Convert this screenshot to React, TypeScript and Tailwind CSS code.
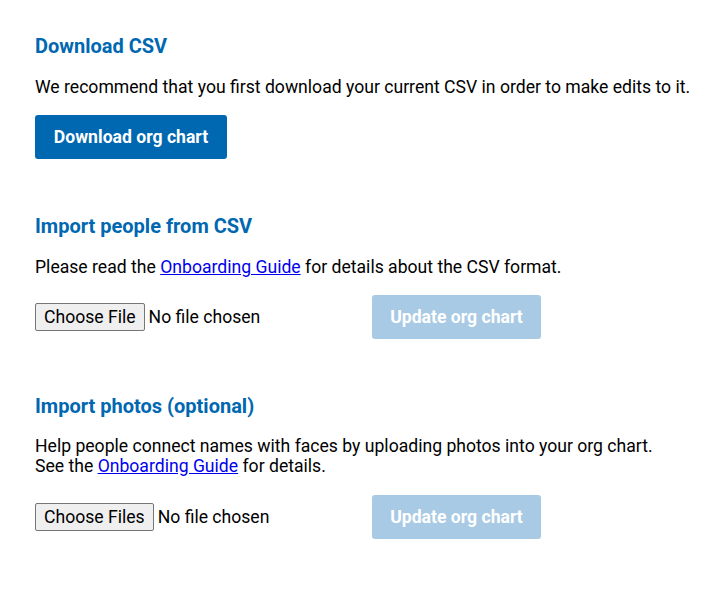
export default function App() {
  return (
    <div className="min-h-screen bg-white pl-[35px] pr-[20px] pt-[34px] font-['Roboto',sans-serif] text-[17.6px] text-black">
      {/* Download */}
      <section>
        <h2 className="text-[20px] leading-6 font-bold text-[#0067b1]">Download CSV</h2>
        <p className="mt-[19px] leading-5">
          We recommend that you first download your current CSV in order to make edits to it.
        </p>
        <button className="mt-[18px] h-[44px] w-[192px] rounded-[3px] bg-[#0067b1] text-[17.6px] font-bold text-white">
          Download org chart
        </button>
      </section>

      {/* Import people */}
      <section className="mt-[55px]">
        <h2 className="text-[20px] leading-6 font-bold text-[#0067b1]">Import people from CSV</h2>
        <p className="mt-[19px] leading-5">
          Please read the{' '}
          <a href="#" className="text-[#0000ee] underline">
            Onboarding Guide
          </a>{' '}
          for details about the CSV format.
        </p>
        <div className="mt-[18px] flex items-center">
          <input
            type="file"
            className="w-[337px] text-[17.6px] file:mr-[4px] file:rounded-[2px] file:border file:border-[#767676] file:bg-[#efefef] file:px-[8px] file:py-[0px] file:text-black"
          />
          <button
            disabled
            className="h-[44px] w-[169px] rounded-[3px] bg-[#a8cae4] text-[17.6px] font-bold text-white"
          >
            Update org chart
          </button>
        </div>
      </section>

      {/* Import photos */}
      <section className="mt-[55px]">
        <h2 className="text-[20px] leading-6 font-bold text-[#0067b1]">Import photos (optional)</h2>
        <p className="mt-[18px] leading-5">
          Help people connect names with faces by uploading photos into your org chart.
          <br />
          See the{' '}
          <a href="#" className="text-[#0000ee] underline">
            Onboarding Guide
          </a>{' '}
          for details.
        </p>
        <div className="mt-[19px] flex items-center">
          <input
            type="file"
            multiple
            className="w-[337px] text-[17.6px] file:mr-[4px] file:rounded-[2px] file:border file:border-[#767676] file:bg-[#efefef] file:px-[8px] file:py-[0px] file:text-black"
          />
          <button
            disabled
            className="h-[44px] w-[169px] rounded-[3px] bg-[#a8cae4] text-[17.6px] font-bold text-white"
          >
            Update org chart
          </button>
        </div>
      </section>
    </div>
  );
}
